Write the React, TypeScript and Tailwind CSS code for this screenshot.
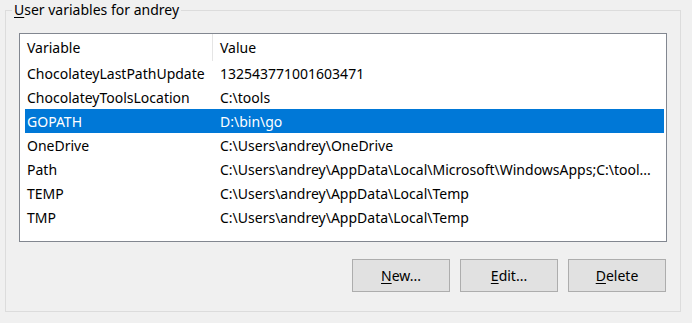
import React from 'react';

const rows = [
  { name: 'ChocolateyLastPathUpdate', value: '132543771001603471' },
  { name: 'ChocolateyToolsLocation', value: 'C:\\tools' },
  { name: 'GOPATH', value: 'D:\\bin\\go' },
  { name: 'OneDrive', value: 'C:\\Users\\andrey\\OneDrive' },
  { name: 'Path', value: 'C:\\Users\\andrey\\AppData\\Local\\Microsoft\\WindowsApps;C:\\tool...' },
  { name: 'TEMP', value: 'C:\\Users\\andrey\\AppData\\Local\\Temp' },
  { name: 'TMP', value: 'C:\\Users\\andrey\\AppData\\Local\\Temp' },
];

const selected = 'GOPATH';

const Button = ({ hot, rest }: { hot: string; rest: string }) => (
  <button className="w-[98px] h-[33px] bg-[#e1e1e1] border border-[#adadad] text-[14px] text-black">
    <span className="underline underline-offset-2">{hot}</span>
    {rest}
  </button>
);

export default function App() {
  return (
    <div
      className="w-[692px] h-[323px] bg-[#f0f0f0] pl-[5px] text-black"
      style={{ fontFamily: '"Segoe UI", "Noto Sans", sans-serif' }}
    >
      <fieldset className="w-[676px] border border-[#dcdcdc] pl-[13px] pr-[13px] pb-[19px]">
        <legend className="-ml-[7px] px-[2px] text-[14px] leading-[20px]">
          <span className="underline underline-offset-2">U</span>ser variables for andrey
        </legend>
        <div className="mt-[13px] w-[648px] h-[209px] border border-[#828790] bg-white">
          <div className="flex h-[27px] items-center text-[14px]">
            <div className="w-[193px] pl-[7px] h-full flex items-center border-r border-[#e5e5e5]">Variable</div>
            <div className="pl-[7px]">Value</div>
          </div>
          <div className="pl-[5px] pr-[2px]">
            {rows.map((r) => (
              <div
                key={r.name}
                className={`flex h-[24px] items-center text-[14px] whitespace-nowrap ${
                  r.name === selected ? 'bg-[#0078d7] text-white' : ''
                }`}
              >
                <div className="w-[193px] pl-[2px] shrink-0">{r.name}</div>
                <div className="pl-[2px]">{r.value}</div>
              </div>
            ))}
          </div>
        </div>
        <div className="mt-[17px] flex justify-end gap-[10px] w-[648px] pr-[1px]">
          <Button hot="N" rest="ew..." />
          <Button hot="E" rest="dit..." />
          <Button hot="D" rest="elete" />
        </div>
      </fieldset>
    </div>
  );
}
